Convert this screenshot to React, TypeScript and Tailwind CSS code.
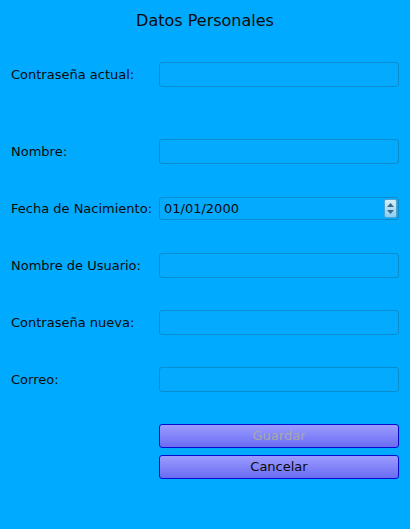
import React from "react";

const font = { fontFamily: '"DejaVu Sans", sans-serif' };

function Row({ label, children, className }: { label: string; children?: React.ReactNode; className?: string }) {
  return (
    <div className={"flex items-center h-[25px] " + (className ?? "")}>
      <div className="w-[159px] shrink-0 pl-[11px] text-[13px] text-[#0a0a0a] whitespace-nowrap">{label}</div>
      {children ?? (
        <input className="w-[240px] h-[25px] rounded-[3px] border border-[#0b8ccc] bg-[#03aafd] outline-none" />
      )}
    </div>
  );
}

export default function App() {
  return (
    <div className="w-[410px] h-[529px] bg-[#00aaff] flex flex-col" style={font}>
      <h1 className="text-center text-[16px] leading-[19px] pt-[11px] text-[#0a0a0a]">Datos Personales</h1>

      <Row label="Contraseña actual:" className="mt-[32px]" />
      <Row label="Nombre:" className="mt-[52px]" />

      {/* spinbox fecha */}
      <Row label="Fecha de Nacimiento:" className="mt-[32px]">
        <div className="w-[240px] h-[23px] rounded-[3px] border border-[#0b8ccc] bg-[#03aafd] flex items-center">
          <span className="flex-1 pl-[4px] text-[13px] text-[#0a0a0a]">01/01/2000</span>
          <div className="w-[13px] h-[19px] mr-[1px] rounded-[2px] border border-[#4aa4d4] bg-gradient-to-b from-[#d6eefa] to-[#8ccdf0] flex flex-col items-center justify-center gap-[3px]">
            <svg width="7" height="4" viewBox="0 0 7 4"><path d="M0 4 L3.5 0 L7 4 Z" fill="#3a6a88" /></svg>
            <svg width="7" height="4" viewBox="0 0 7 4"><path d="M0 0 L3.5 4 L7 0 Z" fill="#3a6a88" /></svg>
          </div>
        </div>
      </Row>

      <Row label="Nombre de Usuario:" className="mt-[32px]" />
      <Row label="Contraseña nueva:" className="mt-[32px]" />
      <Row label="Correo:" className="mt-[32px]" />

      <div className="flex flex-col gap-[7px] pl-[159px] mt-[32px]">
        <button disabled className="w-[240px] h-[24px] rounded-[3px] border border-[#0a0ad0] bg-gradient-to-b from-[#9c9cff] to-[#6b6bf2] text-[13px] text-[#a8a8a8]">
          Guardar
        </button>
        <button className="w-[240px] h-[24px] rounded-[3px] border border-[#0a0ad0] bg-gradient-to-b from-[#9c9cff] to-[#6b6bf2] text-[13px] text-[#0a0a0a]">
          Cancelar
        </button>
      </div>
    </div>
  );
}
